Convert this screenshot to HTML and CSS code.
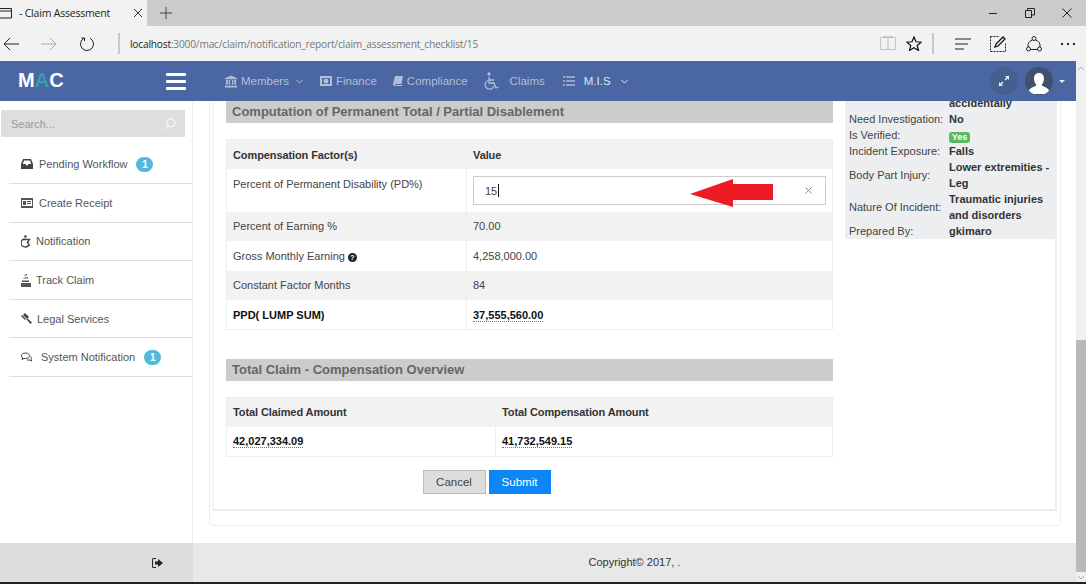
FILE: index.html
```html
<!DOCTYPE html>
<html lang="en">
<head>
    <meta charset="UTF-8">
    <meta name="viewport" content="width=device-width, initial-scale=1.0">
    <title>Claim Assessment</title>
    <link rel="stylesheet" href="styles.css">
</head>
<body>
    <div class="tabstrip">
        <div class="tab">
            <svg class="tab-icon" width="12" height="11" viewBox="0 0 12 11"><path d="M0 .5h11.500v9.500H0M0 3h11.500" fill="none" stroke="#222"/></svg>
            <span class="tab-title">- Claim Assessment</span>
            <svg class="tab-close" width="10" height="10" viewBox="0 0 10 10"><path d="M1 1l8 8M9 1l-8 8" stroke="#333"/></svg>
        </div>
        <svg class="tab-new" width="12" height="12" viewBox="0 0 12 12"><path d="M6 0v12M0 6h12" stroke="#444"/></svg>
        <div class="window-btns">
            <svg width="10" height="10" viewBox="0 0 10 10"><path d="M1 5.500h8" stroke="#222"/></svg>
            <svg width="10" height="10" viewBox="0 0 10 10"><path d="M.5 2.500h6v7h-6zM2.500 2.500v-2h7v6.500h-3" fill="none" stroke="#222"/></svg>
            <svg width="10" height="10" viewBox="0 0 10 10"><path d="M.5.500l9 9M9.500.500l-9 9" stroke="#222"/></svg>
        </div>
    </div>

    <div class="toolbar">
        <svg class="tool-back" width="16" height="14" viewBox="0 0 16 14"><path d="M16 7H1M7 1L1 7l6 6" fill="none" stroke="#222"/></svg>
        <svg class="tool-forward" width="16" height="14" viewBox="0 0 16 14"><path d="M0 7h15M9 1l6 6-6 6" fill="none" stroke="#aaa"/></svg>
        <svg class="tool-reload" width="16" height="16" viewBox="0 0 16 16"><path d="M5 2.200a6.500 6.500 0 1 0 6 0M5.500 5V2H2.500" fill="none" stroke="#222"/></svg>
        <span class="tool-sep"></span>
        <div class="url"><b>localhost</b>:3000/mac/claim/notification_report/claim_assessment_checklist/15</div>
        <svg class="tool-book" width="16" height="15" viewBox="0 0 16 15"><path d="M.5 1.500h15v12H.5zM8 1.500v12M3 .5h4l1 1 1-1h4" fill="none" stroke="#c4c4c4"/></svg>
        <svg class="tool-star" width="16" height="15" viewBox="0 0 16 15"><path d="M8 1l2 4.800 5.200.4-4 3.300 1.300 5L8 11.800l-4.500 2.700 1.300-5-4-3.300 5.200-.4z" fill="none" stroke="#111" stroke-width="1.200"/></svg>
        <span class="tool-sep tool-sep-right"></span>
        <svg class="tool-hub" width="16" height="12" viewBox="0 0 16 12"><path d="M0 1h16M0 6h13M0 11h9" stroke="#222"/></svg>
        <svg class="tool-note" width="16" height="16" viewBox="0 0 16 16"><path d="M.5.500h9M.5.500v15h15v-9" fill="none" stroke="#222" stroke-dasharray="2 1"/><path d="M5 11l1-3 7-7 2 2-7 7z" fill="none" stroke="#111" stroke-width="1.300"/></svg>
        <svg class="tool-share" width="16" height="16" viewBox="0 0 16 16"><g fill="none" stroke="#222"><circle cx="8" cy="2.500" r="2"/><circle cx="2.500" cy="13" r="2"/><circle cx="13.500" cy="13" r="2"/><path d="M6.500 4a6.500 6.500 0 0 0-4.500 7M9.500 4a6.500 6.500 0 0 1 4.500 7M4.500 13.500h7"/></g></svg>
        <div class="tool-dots"><i></i><i></i><i></i></div>
    </div>

    <div class="page">
        <div class="page-main">
            <header class="topbar">
                <div class="logo">M<span>A</span>C</div>
                <div class="burger"><i></i><i></i><i></i></div>
                <nav class="topnav">
                    <a class="nav-members">
                        <svg width="12" height="13" viewBox="0 0 13 13"><path d="M6.500 0L13 3v1H0V3zM1 5h2v5H1zM4 5h1.500v5H4zM7.500 5H9v5H7.500zM10 5h2v5h-2zM0 11h13v2H0z" fill="currentColor"/></svg>
                        Members
                        <svg class="chev" width="7" height="5" viewBox="0 0 7 5"><path d="M.5 1l3 3 3-3" fill="none" stroke="currentColor"/></svg>
                    </a>
                    <a class="nav-finance">
                        <svg width="12" height="10" viewBox="0 0 12 10"><path d="M0 0h12v10H0zM2 2v6h8V2zM6 2.500a2.500 2.500 0 1 1 0 5 2.500 2.500 0 0 1 0-5z" fill="currentColor" fill-rule="evenodd"/></svg>
                        Finance
                    </a>
                    <a class="nav-compliance">
                        <svg width="10" height="10" viewBox="0 0 10 10"><path d="M2 0h8L8.500 8H1.500L2 9h7l.5-.5V10H1.500Q0 10 0 8z" fill="currentColor"/></svg>
                        Compliance
                    </a>
                    <a class="nav-claims">
                        <svg width="16" height="18" viewBox="0 0 16 18"><g fill="none" stroke="currentColor" stroke-width="1.300"><path d="M5 5v6h5l2 5 2.500-1M5 8h5"/><path d="M4 8.500a4.500 4.500 0 1 0 6 5.500"/></g><circle cx="5" cy="2" r="1.700" fill="currentColor"/></svg>
                        Claims
                    </a>
                    <a class="nav-mis">
                        <svg width="12" height="10" viewBox="0 0 12 10"><path d="M0 1h2M3 1h9M0 5h2M3 5h9M0 9h2M3 9h9" stroke="currentColor"/></svg>
                        M.I.S
                        <svg class="chev" width="7" height="5" viewBox="0 0 7 5"><path d="M.5 1l3 3 3-3" fill="none" stroke="currentColor"/></svg>
                    </a>
                </nav>
                <div class="topbar-right">
                    <div class="round-btn">
                        <svg width="10" height="10" viewBox="0 0 10 10"><path d="M6 0h4v4L8.500 2.500 6.500 4.500 5.500 3.500 7.500 1.500zM0 10V6l1.500 1.500 2-2 1 1-2 2L4 10z" fill="#e8ecf4"/></svg>
                    </div>
                    <div class="avatar">
                        <svg width="20" height="22" viewBox="0 0 20 22"><path d="M10 1c3.500 0 5 2.700 5 5.500S13.500 12 12.500 13c.5 1.500 7.500 2.500 7.500 6v3H0v-3c0-3.500 7-4.500 7.500-6C6.500 12 5 9.300 5 6.500S6.500 1 10 1z" fill="#fff"/></svg>
                    </div>
                    <span class="caret"></span>
                </div>
            </header>

            <div class="layout">
                <aside class="sidebar">
                    <div class="search">
                        <span>Search...</span>
                        <svg width="12" height="12" viewBox="0 0 12 12"><path d="M7 1a4 4 0 1 1-.1 0zM4.500 8L1 11.500" fill="none" stroke="#fff"/></svg>
                    </div>
                    <ul class="menu">
                        <li class="item-pending">
                            <svg width="12" height="10" viewBox="0 0 12 10"><path d="M2 0h8l2 5v5H0V5zM3 1.500L1.800 5h2.700l1 1.500h1l1-1.500h2.700L9 1.500z" fill="#444" fill-rule="evenodd"/></svg>
                            <span>Pending Workflow</span><em class="badge">1</em>
                        </li>
                        <li class="item-receipt">
                            <svg width="12" height="10" viewBox="0 0 12 10"><path d="M0 0h12v10H0zM1 2v6h10V2zM2 3h3v4H2zM6 3h4v1H6zM6 5h4v1H6z" fill="#555" fill-rule="evenodd"/></svg>
                            <span>Create Receipt</span>
                        </li>
                        <li class="item-notif">
                            <svg width="10" height="13" viewBox="0 0 10 13"><g fill="none" stroke="#444" stroke-width="1.300"><path d="M4 4a4 4 0 1 0 4 5M2 4.500h6.500L6 8M7 7.500l1.500 3.500"/></g><circle cx="4.500" cy="1.500" r="1.300" fill="#444"/></svg>
                            <span>Notification</span>
                        </li>
                        <li class="item-track">
                            <svg width="10" height="13" viewBox="0 0 10 13"><path d="M0 9h10v4H0zM1 6.500h7v1.500H1zM2 4l5-1v1.500H2zM3 1l3-1v1.500H3z" fill="#555"/></svg>
                            <span>Track Claim</span>
                        </li>
                        <li class="item-legal">
                            <svg width="11" height="11" viewBox="0 0 11 11"><path d="M4 0l4 4-2 2-4-4zM5.500 6.500l1-1L11 9.500 9.500 11zM0 3l1-1 4 4-1 1z" fill="#444"/></svg>
                            <span>Legal Services</span>
                        </li>
                        <li class="item-system">
                            <svg width="11" height="10" viewBox="0 0 11 10"><path d="M4.500 1C2 1 .5 2.300.5 3.800c0 .9.500 1.600 1.200 2.100L1 7.500l2-1h1.500c2.500 0 4-1.200 4-2.700S7 1 4.500 1z" fill="none" stroke="#444"/><path d="M9.500 4.500c1 .5 1.200 2.200.5 3l.5 1.500-2-1H6" fill="none" stroke="#444"/></svg>
                            <span>System Notification</span><em class="badge">1</em>
                        </li>
                    </ul>
                </aside>

                <main class="content">
                    <div class="card">
                        <div class="card-inner">
                            <section class="claim-col">
                                <h4 class="bar">Computation of Permanent Total / Partial Disablement</h4>
                                <table class="grid grid-factors">
                                    <tr class="head"><th>Compensation Factor(s)</th><th>Value</th></tr>
                                    <tr class="row-input">
                                        <td>Percent of Permanent Disability (PD%)</td>
                                        <td>
                                            <div class="field">
                                                <span class="field-value">15</span><span class="field-caret"></span>
                                                <svg class="field-clear" width="7" height="7" viewBox="0 0 7 7"><path d="M.5.500l6 6M6.500.500l-6 6" stroke="#888"/></svg>
                                                <svg class="red-arrow" width="84" height="28" viewBox="0 0 84 28"><path d="M0 15L43 0v5h40v16H43v7z" fill="#ed1c24"/></svg>
                                            </div>
                                        </td>
                                    </tr>
                                    <tr class="alt"><td>Percent of Earning %</td><td>70.00</td></tr>
                                    <tr><td>Gross Monthly Earning <i class="help">?</i></td><td>4,258,000.00</td></tr>
                                    <tr class="alt"><td>Constant Factor Months</td><td>84</td></tr>
                                    <tr><td><b>PPD( LUMP SUM)</b></td><td><b class="amount">37,555,560.00</b></td></tr>
                                </table>

                                <h4 class="bar bar-total">Total Claim - Compensation Overview</h4>
                                <table class="grid grid-total">
                                    <tr class="head"><th>Total Claimed Amount</th><th>Total Compensation Amount</th></tr>
                                    <tr><td><b class="amount">42,027,334.09</b></td><td><b class="amount">41,732,549.15</b></td></tr>
                                </table>

                                <div class="actions">
                                    <button class="btn btn-cancel">Cancel</button>
                                    <button class="btn btn-submit">Submit</button>
                                </div>
                            </section>

                            <aside class="summary">
                                <table>
                                    <tr><td></td><td>accidentally</td></tr>
                                    <tr><td>Need Investigation:</td><td>No</td></tr>
                                    <tr><td>Is Verified:</td><td><span class="label-yes">Yes</span></td></tr>
                                    <tr><td>Incident Exposure:</td><td>Falls</td></tr>
                                    <tr><td>Body Part Injury:</td><td>Lower extremities - Leg</td></tr>
                                    <tr><td>Nature Of Incident:</td><td>Traumatic injuries and disorders</td></tr>
                                    <tr><td>Prepared By:</td><td>gkimaro</td></tr>
                                </table>
                            </aside>
                        </div>
                    </div>
                </main>
            </div>

            <footer class="footer">
                <div class="footer-side">
                    <svg width="11" height="10" viewBox="0 0 11 10"><path d="M4 0H1.500Q0 0 0 1.500v7Q0 10 1.500 10H4V9H1.500Q1 9 1 8.500v-7Q1 1 1.500 1H4zM6 1v2.500H3v3h3V9l5-4z" fill="#222"/></svg>
                </div>
                <div class="footer-copy">Copyright© 2017, .</div>
            </footer>
        </div>

        <div class="scrollbar">
            <svg width="8" height="5" viewBox="0 0 8 5"><path d="M1 4l3-3 3 3" fill="none" stroke="#aaa"/></svg>
            <div class="scroll-thumb"></div>
            <svg width="8" height="5" viewBox="0 0 8 5"><path d="M1 1l3 3 3-3" fill="none" stroke="#aaa"/></svg>
        </div>
    </div>
    <div class="taskbar-edge"></div>
</body>
</html>
```

FILE: styles.css
```css
* {
    box-sizing: border-box;
}
body {
    font-family: 'Liberation Sans', Arial, sans-serif;
    font-size: 11px;
    color: #444;
    margin: 0;
    height: 584px;
    overflow: hidden;
    background: #fff;
}
svg {
    flex: none;
    display: block;
}

/* browser chrome */
.tabstrip {
    display: flex;
    align-items: center;
    height: 26px;
    background: #ccc;
}
.tab {
    display: flex;
    align-items: center;
    width: 147px;
    height: 26px;
    background: #f2f2f2;
}
.tab-title {
    margin-left: 7px;
    width: 114px;
    font-family: 'Open Sans', sans-serif;
    font-size: 10.500px;
    letter-spacing: -0.2px;
    color: #222;
}
.tab-new {
    margin-left: 13px;
}
.window-btns {
    display: flex;
    gap: 27px;
    margin-left: auto;
    margin-right: 14px;
}
.toolbar {
    display: flex;
    align-items: center;
    height: 35px;
    background: #f2f2f2;
    padding-left: 3px;
}
.tool-forward {
    margin-left: 22px;
}
.tool-reload {
    margin-left: 22px;
}
.tool-sep {
    width: 2px;
    height: 21px;
    margin-left: 23px;
    background: #c8c8c8;
}
.url {
    margin-left: 10px;
    width: 750px;
    font-family: 'Open Sans', sans-serif;
    font-size: 10.200px;
    letter-spacing: -0.2px;
    color: #777;
    white-space: nowrap;
}
.url b {
    font-weight: 400;
    color: #222;
}
.tool-star {
    margin-left: 10px;
}
.tool-sep-right {
    margin-left: 10px;
}
.tool-hub {
    margin-left: 21px;
}
.tool-note {
    margin-left: 19px;
}
.tool-share {
    margin-left: 20px;
}
.tool-dots {
    display: flex;
    gap: 4px;
    margin-left: 19px;
}
.tool-dots i {
    width: 2px;
    height: 2px;
    background: #222;
}

/* app */
.page {
    display: flex;
    height: 521px;
}
.page-main {
    display: flex;
    flex-direction: column;
    width: 1076px;
}
.topbar {
    display: flex;
    align-items: center;
    height: 40px;
    flex: none;
    background: #4a66a3;
    padding-left: 18px;
}
.logo {
    width: 148px;
    font-size: 20px;
    font-weight: bold;
    color: #fff;
    margin-top: -2px;
}
.logo span {
    color: #3a9ca8;
}
.burger {
    display: flex;
    flex-direction: column;
    gap: 4px;
    width: 20px;
}
.burger i {
    height: 3px;
    background: #fff;
    border-radius: 1px;
}
.topnav {
    display: flex;
    align-items: center;
    margin-left: 39px;
    font-size: 11.500px;
    color: #b2bed8;
}
.topnav a {
    display: flex;
    align-items: center;
    gap: 4px;
}
.nav-finance {
    margin-left: 17px;
}
.nav-compliance {
    margin-left: 16px;
}
.nav-claims {
    margin-left: 16px;
}
.nav-claims svg {
    margin-right: 6px;
}
.nav-mis {
    margin-left: 18px;
    color: #dfe5f0;
}
.nav-mis svg:first-child {
    margin-right: 5px;
}
.topnav .chev {
    margin-left: 3px;
}
.nav-mis .chev {
    margin-left: 6px;
}
.topbar-right {
    display: flex;
    align-items: center;
    margin-left: auto;
    margin-right: 11px;
}
.round-btn,
.avatar {
    display: flex;
    align-items: center;
    justify-content: center;
    width: 28px;
    height: 28px;
    border-radius: 50%;
    background: #45608f;
}
.avatar {
    margin-left: 7px;
    background: #41506c;
    overflow: hidden;
}
.avatar svg {
    margin-top: 3px;
}
.caret {
    margin-left: 6px;
    border: 3px solid transparent;
    border-top-color: #e8ecf4;
    border-bottom: 0;
}

.layout {
    display: flex;
    flex: 1;
    min-height: 0;
}
.sidebar {
    width: 193px;
    flex: none;
    border-right: 1px solid #f0f0f0;
    padding-top: 9px;
}
.search {
    display: flex;
    align-items: center;
    justify-content: space-between;
    width: 184px;
    height: 27px;
    margin-left: 1px;
    padding: 0 9px 0 10px;
    background: #dedede;
    color: #999;
    font-size: 11px;
}
.menu {
    list-style: none;
    margin: 8.500px 0 0 9px;
    padding: 0;
}
.menu li {
    display: flex;
    align-items: center;
    height: 38.600px;
    padding-left: 12px;
    border-bottom: 1px solid #dcdce4;
    color: #555;
}
.item-pending span,
.item-receipt span {
    margin-left: 6px;
}
.item-notif span {
    margin-left: 5px;
}
.item-track span {
    margin-left: 5px;
}
.item-legal span {
    margin-left: 5px;
}
.item-system span {
    margin-left: 9px;
}
.badge {
    display: block;
    margin-left: 9px;
    width: 17px;
    height: 15px;
    line-height: 15px;
    border-radius: 8px;
    background: #52b8dc;
    color: #fff;
    font-style: normal;
    font-weight: bold;
    font-size: 10px;
    text-align: center;
}

.content {
    flex: 1;
    min-width: 0;
    overflow: hidden;
}
.card {
    width: 852px;
    height: 428px;
    margin: -3px 0 0 16px;
    padding: 0 3px 14px 3px;
    border: 1px solid #eee;
    border-radius: 3px;
}
.card-inner {
    display: flex;
    height: 100%;
    padding: 2px 0 0 12px;
    border: 2px solid #eee;
    border-top: 0;
    border-left-width: 1px;
}
.claim-col {
    width: 607px;
    flex: none;
}
.bar {
    margin: 0;
    height: 22px;
    line-height: 21px;
    padding-left: 6px;
    background: #ccc;
    color: #666;
    font-size: 13px;
}
.bar-total {
    margin-top: 28.500px;
}
.grid {
    width: 100%;
    margin-top: 16px;
    border-collapse: collapse;
    table-layout: fixed;
    border: 1px solid #eee;
}
.grid th,
.grid td {
    padding: 0 6px;
    height: 29.500px;
    text-align: left;
    border-left: 1px solid #eee;
}
.grid th {
    letter-spacing: -0.1px;
    color: #333;
    background: #f2f2f2;
}
.grid b {
    color: #111;
}
.grid .alt td {
    background: #f2f2f2;
}
.grid-factors th:first-child {
    width: 240px;
}
.grid-total th:first-child {
    width: 269px;
}
.grid .row-input td {
    height: 42.500px;
    vertical-align: top;
    padding-top: 7px;
}
.grid .row-input td:first-child {
    padding-top: 9px;
}
.field {
    position: relative;
    display: flex;
    align-items: center;
    height: 29px;
    padding-left: 11px;
    border: 1px solid #ccc;
    background: #fff;
}
.field-caret {
    width: 1px;
    height: 13px;
    margin-left: 1px;
    background: #111;
}
.field-clear {
    margin-left: auto;
    margin-right: 13px;
}
.red-arrow {
    position: absolute;
    left: 216px;
    top: 2px;
}
.help {
    display: inline-block;
    width: 9px;
    height: 9px;
    line-height: 9px;
    border-radius: 50%;
    background: #222;
    color: #fff;
    font-style: normal;
    font-weight: bold;
    font-size: 7px;
    text-align: center;
}
.amount {
    border-bottom: 1px dotted #777;
}
.grid-total td {
    height: 30px;
}
.actions {
    display: flex;
    justify-content: center;
    gap: 3px;
    margin-top: 13px;
    padding-right: 86px;
}
.btn {
    height: 24px;
    padding: 0;
    border: 1px solid #bbb;
    font-family: inherit;
    font-size: 11.500px;
}
.btn-cancel {
    width: 63px;
    background: #ddd;
    color: #444;
}
.btn-submit {
    width: 62px;
    background: #0d86f7;
    border-color: #0d86f7;
    color: #fff;
}
.summary {
    align-self: flex-start;
    width: 211px;
    margin: -6px 0 0 12px;
    padding: 0 4px;
    background: #eceef0;
    color: #444;
}
.summary table {
    border-collapse: collapse;
    table-layout: fixed;
    width: 100%;
}
.summary td {
    padding: 0;
    line-height: 16px;
}
.summary td:first-child {
    width: 100px;
}
.summary td:last-child {
    font-weight: bold;
    color: #333;
}
.label-yes {
    display: inline-block;
    width: 21px;
    height: 11px;
    line-height: 11px;
    border-radius: 3px;
    background: #5cb85c;
    color: #fff;
    font-size: 9px;
    text-align: center;
    vertical-align: -1px;
}

.footer {
    display: flex;
    flex: none;
    height: 39px;
    background: #e8e8e8;
}
.footer-side {
    display: flex;
    align-items: center;
    justify-content: flex-end;
    width: 193px;
    padding-right: 30px;
    background: #ddd;
}
.footer-copy {
    flex: 1;
    line-height: 39px;
    text-align: center;
    color: #333;
}
.scrollbar {
    display: flex;
    flex-direction: column;
    align-items: center;
    width: 10px;
    padding-top: 5px;
    background: #f0f0f0;
}
.scroll-thumb {
    width: 10px;
    height: 232px;
    margin-top: 269px;
    margin-bottom: 3px;
    background: #b9b9b9;
}
.taskbar-edge {
    height: 2px;
    background: #222;
}
```
